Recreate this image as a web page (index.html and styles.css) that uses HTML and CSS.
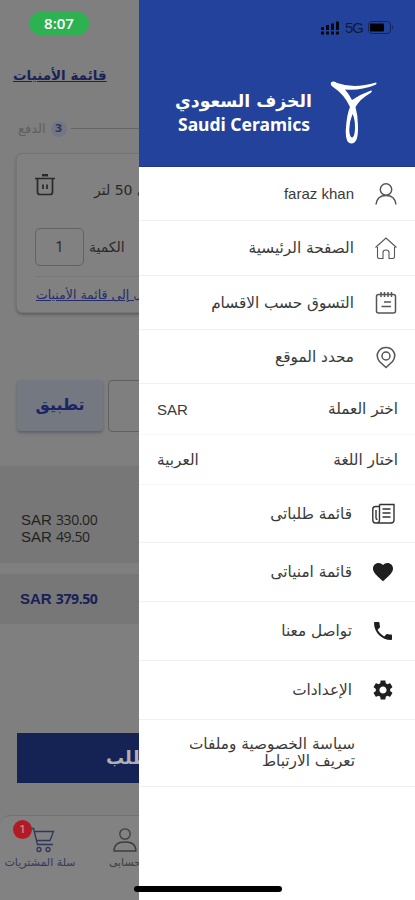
FILE: index.html
```html
<!DOCTYPE html>
<html lang="ar">
<head>
<meta charset="utf-8">
<title>Saudi Ceramics</title>
<link rel="stylesheet" href="styles.css">
</head>
<body>
<div class="screen">
  <main class="page">
    <div class="status"><span class="clock">8:07</span></div>
    <div class="wish"><a>قائمة الأمنيات</a></div>
    <div class="step"><span>الدفع</span><b>3</b><i></i></div>
    <section class="card">
      <div class="product">
        <svg width="20" height="23" viewBox="0 0 20 23" fill="none" stroke="#292929" stroke-width="1.7"><path d="M0 4.500h20M2.500 4.500v13.500q0 2.500 2.500 2.500h10q2.500 0 2.500-2.500v-13.500M8 10.500v4.500M12 10.500v4.500"/><path d="M7 1.200h6" stroke-width="2.400"/></svg>
        <span dir="rtl">ي 50 لتر</span>
      </div>
      <div class="qty"><div class="num">1</div><span>الكمية</span></div>
      <div class="move"><a dir="rtl">ل إلى قائمة الأمنيات</a></div>
    </section>
    <div class="coupon"><div class="apply">تطبيق</div><div class="code"></div></div>
    <div class="sums"><div>SAR <span>330.00</span></div><div>SAR <span>49.50</span></div></div>
    <div class="total">SAR <span>379.50</span></div>
    <div class="order"><span dir="rtl">طلب</span></div>
    <nav class="tabs">
      <div class="tab cart">
        <svg width="25" height="26" viewBox="0 0 25 26" fill="none" stroke="#32365a" stroke-width="1.300"><path d="M0 1.500h2.500l4 16h15.500M3.500 4.500h19l-3.500 9H5.500"/><circle cx="8" cy="22.500" r="2"/><circle cx="17" cy="22.500" r="2"/></svg>
        <em>1</em>
        <span>سلة المشتريات</span>
      </div>
      <div class="tab account">
        <svg width="24" height="26" viewBox="0 0 24 26" fill="none" stroke="#3c3c3c" stroke-width="1.300"><circle cx="12" cy="7" r="5.200"/><path d="M1 24q0-9 11-9t11 9z"/></svg>
        <span>حسابى</span>
      </div>
    </nav>
  </main>
  <aside class="drawer" dir="rtl">
    <header class="head">
      <div class="signal" dir="ltr">
        <svg width="20" height="14" viewBox="0 0 20 14" fill="#08080c"><path d="M1 6h3v3H1zM6 4h3v5H6zM11 2.500h3V9h-3zM16 0.500h3V9h-3zM1 10.500h3v3H1zM6 10.500h3v3H6zM11 10.500h3v3h-3zM16 10.500h3v3h-3z"/></svg>
        <span>5G</span>
        <svg width="26" height="13" viewBox="0 0 26 13"><rect x=".5" y=".5" width="22" height="12" rx="3.500" fill="none" stroke="#152558"/><rect x="2" y="2.500" width="14" height="8" rx="1" fill="#020204"/><path d="M24 4.500v4q2-2 0-4" fill="#152558"/></svg>
      </div>
      <div class="brand">
        <svg width="48" height="64" viewBox="0 0 48 64" fill="#fff" fill-rule="evenodd"><path d="M1 1.500Q3-.5 7 2Q24 8 46 1.500Q47.500 3 45 4Q30 10 15 8.500Q19 13 22 19Q31 13 41 9.500Q43 10 40.500 12Q30 18 25.500 26Q28 35 28 45Q28.500 62.500 21.500 62.500Q14.500 62.500 16 46Q17 33 20 26Q14 13 3 6Q0 4 1 1.500ZM22.500 33Q18.500 43 19.500 52Q20.500 57 22.500 56.500Q25 55 25 46Q25 38 22.500 33Z"/></svg>
        <div class="name"><strong>الخزف السعودي</strong><b dir="ltr">Saudi Ceramics</b></div>
      </div>
    </header>
    <div class="row r54"><svg class="ic" viewBox="0 0 24 24"><circle cx="12" cy="7.500" r="5.700"/><path d="M2 22.500Q3 13.500 12 13.500T22 22.500"/></svg><span class="latin">faraz khan</span></div>
    <div class="row r55"><svg class="ic thin" viewBox="0 0 24 24"><path d="M1.500 11.500L12 2l10.500 9.500M3.500 9.800v11q0 1.700 1.700 1.700H9v-6q0-2.500 3-2.500t3 2.500v6h3.800q1.700 0 1.700-1.700v-11"/></svg><span>الصفحة الرئيسية</span></div>
    <div class="row r54"><svg class="ic" viewBox="0 0 24 24"><rect x="2.500" y="3.500" width="19" height="18.500" rx="2"/><path d="M7 1v5M10.500 1v5M14 1v5M17.500 1v5M7.500 15.500h9.500M10 11h7"/></svg><span>التسوق حسب الاقسام</span></div>
    <div class="row r54"><svg class="ic" viewBox="0 0 24 24"><path d="M12 22.500L5.500 16.500Q1.500 11 4.500 6.500Q7 2.500 12 2.500T19.500 6.500Q22.500 11 18.500 16.500Z"/><circle cx="12" cy="11" r="4"/></svg><span>محدد الموقع</span></div>
    <div class="row opt r51"><span>اختر العملة</span><span class="sar">SAR</span></div>
    <div class="row opt r50"><span>اختار اللغة</span><span>العربية</span></div>
    <div class="row low r58"><svg class="ic news" viewBox="0 0 24 24"><path d="M8.500 2.500H23V18q0 3-3 3H4.500Q1.800 21 1.800 18V7q0-2.500 3-2.500h3.700M8.500 2.500V18q0 3-3.500 3M5 8v8q0 1.500 1.500 1.500M11.500 7h8M11.500 11h8M11.500 15h8"/></svg><span>قائمة طلباتى</span></div>
    <div class="row low r59"><svg class="ic solid" viewBox="0 0 24 24"><path d="M12 21.350l-1.450-1.320C5.400 15.360 2 12.280 2 8.500 2 5.420 4.420 3 7.500 3c1.740 0 3.410.81 4.500 2.090C13.090 3.810 14.760 3 16.500 3 19.580 3 22 5.420 22 8.500c0 3.780-3.400 6.860-8.550 11.540z"/></svg><span>قائمة امنياتى</span></div>
    <div class="row low r59"><svg class="ic solid phone" viewBox="0 0 24 24"><path d="M6.620 10.790c1.440 2.830 3.760 5.140 6.590 6.590l2.200-2.200c.27-.27.67-.36 1.020-.24 1.120.37 2.330.57 3.570.57.550 0 1 .45 1 1V20c0 .55-.45 1-1 1C10.610 21 3 13.390 3 4c0-.55.45-1 1-1h3.500c.55 0 1 .45 1 1 0 1.250.2 2.450.57 3.570.11.35.03.74-.25 1.020z"/></svg><span>تواصل معنا</span></div>
    <div class="row low r59"><svg class="ic solid" viewBox="0 0 24 24"><path d="M19.140 12.940c.04-.3.06-.61.06-.94s-.02-.64-.07-.94l2.030-1.580c.18-.14.23-.41.12-.61l-1.920-3.320c-.12-.22-.37-.29-.59-.22l-2.390.96c-.5-.38-1.030-.7-1.620-.94l-.36-2.540c-.04-.24-.24-.41-.48-.41h-3.840c-.24 0-.43.17-.47.41l-.36 2.540c-.59.24-1.130.57-1.620.94l-2.390-.96c-.22-.08-.47 0-.59.22L2.740 8.870c-.12.21-.08.47.12.61l2.030 1.580c-.05.3-.09.63-.09.94s.02.64.07.94l-2.030 1.580c-.18.14-.23.41-.12.61l1.920 3.320c.12.22.37.29.59.22l2.390-.96c.5.38 1.030.7 1.620.94l.36 2.540c.05.24.24.41.48.41h3.840c.24 0 .44-.17.47-.41l.36-2.540c.59-.24 1.130-.56 1.620-.94l2.390.96c.22.08.47 0 .59-.22l1.920-3.320c.12-.22.07-.47-.12-.61zM12 15.600c-1.980 0-3.600-1.620-3.600-3.600s1.620-3.600 3.600-3.600 3.600 1.620 3.600 3.600-1.620 3.600-3.600 3.600z"/></svg><span>الإعدادات</span></div>
    <div class="row policy r67"><p><span>سياسة الخصوصية وملفات</span><br><span>تعريف الارتباط</span></p></div>
  </aside>
  <div class="home"></div>
</div>
</body>
</html>
```
FILE: styles.css
```css
*{box-sizing:border-box}
body{margin:0;font-family:"DejaVu Sans",sans-serif;font-size:15.3px;color:#3a3a3a}
svg{display:block;flex:none}
span,a,strong{white-space:nowrap}
.screen{position:relative;width:415px;height:900px;display:grid;grid-template-columns:139px 276px;overflow:hidden}
.page{background:#7f7f7f;overflow:hidden;height:900px;min-width:0;font-size:14px}
.status{height:63px;padding:12px 0 0 29px}
.clock{display:block;width:60px;height:23px;border-radius:12px;background:#2eb150;color:#fff;font:600 15px/23px "Open Sans",sans-serif;text-align:center}
.wish{height:53px;padding-left:13px;font-size:13.500px;line-height:25px;font-weight:bold;color:#1c2358}
.wish a,.move a{text-decoration:underline}
.step{display:flex;align-items:center;height:25px;padding-left:18px;font-size:13px;color:#606060}
.step b{width:16px;height:16px;margin:0 4px 0 5px;border-radius:50%;background:#747783;color:#32375f;line-height:16px;text-align:center;font-size:11px}
.step i{flex:1;height:1px;background:#656565}
.card{margin:12px 0 0 16px;width:300px;height:160px;border:1px solid #747474;border-radius:6px;box-shadow:0 2px 3px #606060;background:#818181;padding-left:18px}
.product{height:74px;padding-top:20px;display:flex;gap:39px;color:#292929}
.product span{line-height:34px;margin-top:-1px;font-size:14px}
.qty{display:flex;align-items:center;gap:5px;height:38px;color:#292929}
.num{width:49px;height:38px;border:1px solid #626262;border-radius:5px;line-height:37px;text-align:center;font-family:Roboto,sans-serif}
.move{margin-top:10px;border-top:1px solid #777;padding-left:1px;line-height:36px;font-size:12.500px;color:#242b68}
.coupon{display:flex;gap:5px;margin:67px 0 0 17px;height:53px}
.apply{width:86px;height:51px;flex:none;border-radius:4px;background:#747880;box-shadow:0 2px 3px #5d616c;color:#1b2464;font-weight:bold;font-size:16px;line-height:50px;text-align:center}
.code{width:200px;flex:none;height:52px;border:1px solid #606060;border-radius:4px}
.sums{height:97px;margin-top:33px;background:#777;padding:45px 0 0 21px;font:15px/17px "Liberation Sans",sans-serif;color:#222}
.sums span,.total span{font-family:"Open Sans",sans-serif;font-size:14px;letter-spacing:-.4px}
.total{height:50px;margin-top:11px;background:#777;padding-left:20px;font:bold 15px/50px "Liberation Sans",sans-serif;color:#182055}
.order{width:380px;height:50px;margin:109px 0 0 17px;background:#142254;padding-left:89px;color:#aeb0b8;font-size:18px;font-weight:bold;line-height:49px}
.tabs{position:relative;display:flex;width:500px;height:85px;margin-top:32px;border-top:1px solid #727272;border-radius:10px 10px 0 0;background:#828282;padding-top:11px;font-size:11px}
.tab{position:relative;display:flex;flex-direction:column;align-items:center;gap:3px}
.cart{width:80px;color:#343861}
.cart svg{margin-left:7px}
.account{width:90px;color:#3c3c3c}
.cart em{position:absolute;left:13px;top:-7px;width:19px;height:19px;border-radius:50%;background:#b31b24;color:#d7a3a5;font:11px/19px Roboto,sans-serif;text-align:center}
.drawer{background:#fff;height:900px}
.head{height:167px;background:#23429b;padding:20px 19px 0 0;border-bottom:1px solid #1f3b8e}
.signal{display:flex;align-items:center;gap:5px;height:15px;padding-left:181px}
.signal span{font:15px/15px "Liberation Sans",sans-serif;color:#101a38;letter-spacing:-1px;width:18px}
.brand{display:flex;margin-top:46px;padding-right:18px;gap:18px;color:#fff}
.name{width:134px;padding-top:6px;display:flex;flex-direction:column}
.name strong{font-size:17.300px;line-height:28px}
.name b{font:bold 17.500px/18px "Noto Sans",sans-serif;text-align:left;white-space:nowrap}
.row{display:flex;align-items:center;border-bottom:1px solid #f0f0f0;padding:0 17px 0 18px;gap:20px}
.ic{width:24px;height:24px;fill:none;stroke:#555;stroke-width:1.500}
.thin{stroke-width:1.100}
.news{stroke:#333;stroke-width:1.400}
.solid{fill:#1f1f1f;stroke:none}
.low{padding-right:20px;gap:19px}
.opt{justify-content:space-between;border-color:#f7f7f7}
.latin,.sar{font-family:"Liberation Sans",sans-serif;font-size:15px}
.policy{padding-right:60px}
.policy p{margin:0;line-height:17px}
.r50{height:50px}.r51{height:51px}.r54{height:54px}.r55{height:55px}.r58{height:58px}.r59{height:59px}.r67{height:67px}
.home{position:absolute;left:134px;top:886px;width:148px;height:6px;border-radius:3px;background:#000}
```
